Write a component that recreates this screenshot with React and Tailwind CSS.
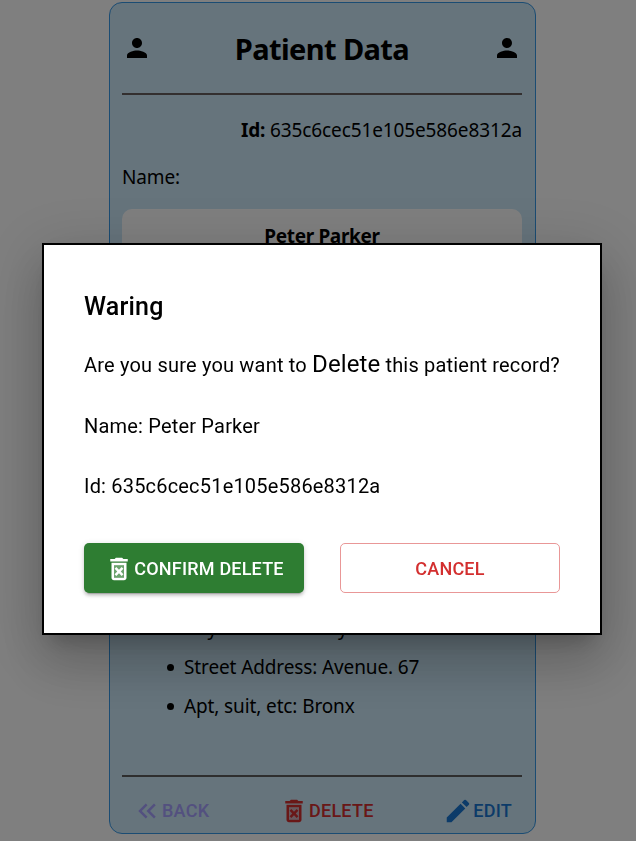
function Icon({ children }) {
  return (
    <svg viewBox="0 0 24 24" fill="currentColor" className="h-[30px] w-[30px] shrink-0">
      {children}
    </svg>
  );
}

const PersonIcon = () => (
  <Icon>
    <path d="M12 12c2.21 0 4-1.79 4-4s-1.79-4-4-4-4 1.79-4 4 1.79 4 4 4m0 2c-2.67 0-8 1.34-8 4v2h16v-2c0-2.66-5.33-4-8-4" />
  </Icon>
);

const DeleteIcon = () => (
  <Icon>
    <path d="M8 9h8v10H8z" opacity=".3" />
    <path d="M14.12 10.47 12 12.59l-2.13-2.12-1.41 1.41L10.59 14l-2.12 2.12 1.41 1.41L12 15.41l2.12 2.12 1.41-1.41L13.41 14l2.12-2.12zM15.5 4l-1-1h-5l-1 1H5v2h14V4zM6 19c0 1.1.9 2 2 2h8c1.1 0 2-.9 2-2V7H6zM8 9h8v10H8z" />
  </Icon>
);

const BackIcon = () => (
  <Icon>
    <path d="M17.59 18 19 16.59 14.42 12 19 7.41 17.59 6l-6 6z" />
    <path d="m11 18 1.41-1.41L7.83 12l4.58-4.59L11 6l-6 6z" />
  </Icon>
);

const EditIcon = () => (
  <Icon>
    <path d="M3 17.25V21h3.75L17.81 9.94l-3.75-3.75zM20.71 7.04c.39-.39.39-1.02 0-1.41l-2.34-2.34a.9959.9959 0 0 0-1.41 0l-1.83 1.83 3.75 3.75z" />
  </Icon>
);

function Bullet({ children }) {
  return (
    <li className="flex items-center">
      <span className="mr-[10px] size-[7px] rounded-full bg-black" />
      {children}
    </li>
  );
}

function PatientCard() {
  return (
    <section className="ml-[109px] mt-[2px] flex h-[832px] w-[427px] flex-col rounded-[13px] border border-[#3698e6] bg-[#cce8f8] pl-3 pr-[13px] font-['Noto_Sans',sans-serif] text-[19px] leading-[30px] tracking-[-0.12px] text-black">
      <header className="flex h-[90px] shrink-0 items-center justify-between">
        <PersonIcon />
        <h1 className="pt-px text-[29px] font-bold tracking-[-0.6px]">Patient Data</h1>
        <PersonIcon />
      </header>
      <hr className="h-0.5 shrink-0 border-0 bg-[#665e5e]" />
      <p className="mt-5 text-right"><b>Id:</b> 635c6cec51e105e586e8312a</p>
      <p className="mt-[17px]">Name:</p>
      <div className="mt-[17px] flex h-[54px] shrink-0 items-center justify-center rounded-[10px] bg-white font-bold tracking-[-0.35px]">
        Peter Parker
      </div>
      <ul className="mt-[350px] space-y-[9px] pl-[45px]">
        <Bullet>City: New York City</Bullet>
        <Bullet>Street Address: Avenue. 67</Bullet>
        <Bullet>Apt, suit, etc: Bronx</Bullet>
      </ul>
      <hr className="mt-auto h-0.5 shrink-0 border-0 bg-[#5c5c5c]" />
      <footer className="flex h-[56px] shrink-0 items-center justify-between px-2.5 pt-3 font-['Roboto',sans-serif] text-[18px] font-medium tracking-[0.25px]">
        <button className="flex items-center text-[#a6a0ff]"><BackIcon />BACK</button>
        <button className="flex items-center text-[#d32f2f]"><DeleteIcon />DELETE</button>
        <button className="flex items-center text-[#1976d2]"><EditIcon />EDIT</button>
      </footer>
    </section>
  );
}

function ConfirmDialog() {
  return (
    <div className="fixed inset-0 bg-black/50 pl-[42px] pt-[243px]">
      <div role="dialog" className="h-[392px] w-[560px] border-2 border-black bg-white p-10 font-['Roboto',sans-serif] text-[20px] leading-[30px] tracking-[0.19px] text-black shadow-[0_14px_19px_-9px_rgba(0,0,0,0.2),0_30px_48px_4px_rgba(0,0,0,0.14),0_11px_58px_10px_rgba(0,0,0,0.12)]">
        <h2 className="pt-0.5 text-[25px] font-medium leading-10">Waring</h2>
        <p className="mt-[18px] h-10 whitespace-nowrap leading-[38px]">
          Are you sure you want to <span className="text-[24px] tracking-[0.1px]">Delete</span> this patient record?
        </p>
        <p className="mt-[26px]">Name: Peter Parker</p>
        <p className="mt-[30px]">Id: 635c6cec51e105e586e8312a</p>
        <div className="mt-[42px] flex gap-9 text-[18px] font-medium tracking-[0.2px]">
          <button className="flex h-[50px] w-[220px] items-center justify-center rounded-[5px] bg-[#2e7d32] pt-px text-white shadow-[0_4px_1px_-3px_rgba(0,0,0,0.2),0_3px_3px_0_rgba(0,0,0,0.14),0_1px_6px_0_rgba(0,0,0,0.12)]">
            <DeleteIcon />CONFIRM DELETE
          </button>
          <button className="h-[50px] w-[220px] rounded-[5px] border border-[#e99797] pt-px text-[#d32f2f]">CANCEL</button>
        </div>
      </div>
    </div>
  );
}

export default function App() {
  return (
    <main className="flow-root h-[841px] overflow-hidden bg-white">
      <PatientCard />
      <ConfirmDialog />
    </main>
  );
}
